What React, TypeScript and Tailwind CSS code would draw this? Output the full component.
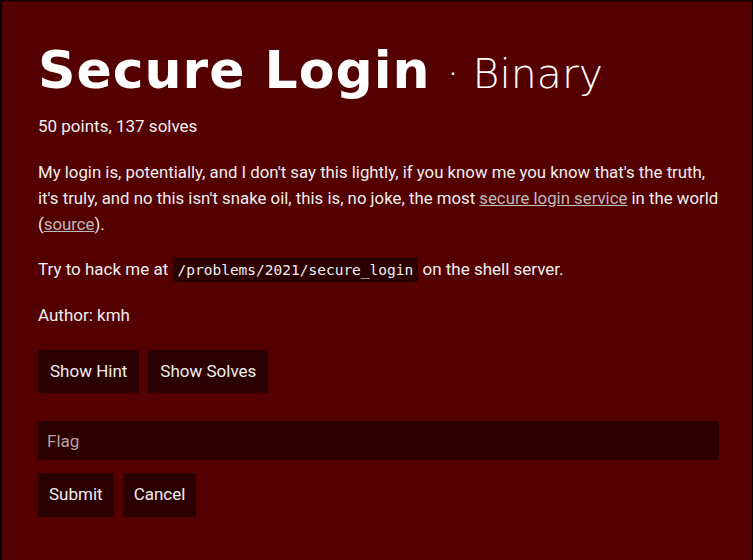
export default function App() {
  return (
    <div className="min-h-[560px] w-full border-t border-l-2 border-r border-black bg-[#550000] text-[#eeeeee] font-['Roboto',sans-serif]">
      <div className="pl-[36px] pr-[33px] pt-[43px] pb-10">
        <h1 className="flex items-baseline text-white leading-none">
          <span className="font-['DejaVu_Sans',sans-serif] font-bold text-[52px] tracking-[1px]">Secure Login</span>
          <span className="ml-[16px] text-[41px] font-['DejaVu_Sans',sans-serif] font-light">· Binary</span>
        </h1>
        <p className="mt-[17px] text-[17px] leading-[26px]">50 points, 137 solves</p>
        <p className="mt-[20px] -mr-[8px] text-[16.8px] leading-[26px]">
          My login is, potentially, and I don't say this lightly, if you know me you know that's the truth, it's truly, and no this isn't snake oil, this is, no joke, the most{" "}
          <a className="text-[#bbbbbb] underline">secure login service</a> in the world (<a className="text-[#bbbbbb] underline">source</a>).
        </p>
        <p className="mt-[19px] text-[17px] leading-[26px]">
          Try to hack me at{" "}
          <code className="rounded-[3px] border border-[#1a0000] bg-[#2b0000] px-[4px] py-[3px] font-['DejaVu_Sans_Mono',monospace] text-[14.5px]">
            /problems/2021/secure_login
          </code>{" "}
          on the shell server.
        </p>
        <p className="mt-[19px] text-[17px] leading-[26px]">Author: kmh</p>
        <div className="mt-[22px] flex gap-[9px]">
          <button className="h-[43px] bg-[#2b0000] px-[12px] text-[17px] text-[#eeeeee]">Show Hint</button>
          <button className="h-[43px] bg-[#2b0000] px-[12px] text-[17px] text-[#eeeeee]">Show Solves</button>
        </div>
        <input
          placeholder="Flag"
          className="mt-[28px] block h-[39px] w-full bg-[#2b0000] px-[9px] text-[17px] text-[#eeeeee] outline-none placeholder:text-[#b8a0a0]"
        />
        <div className="mt-[13px] flex gap-[9px]">
          <button className="h-[44px] bg-[#2b0000] px-[11px] text-[17px] text-[#eeeeee]">Submit</button>
          <button className="h-[44px] bg-[#2b0000] px-[11px] text-[17px] text-[#eeeeee]">Cancel</button>
        </div>
      </div>
    </div>
  );
}
